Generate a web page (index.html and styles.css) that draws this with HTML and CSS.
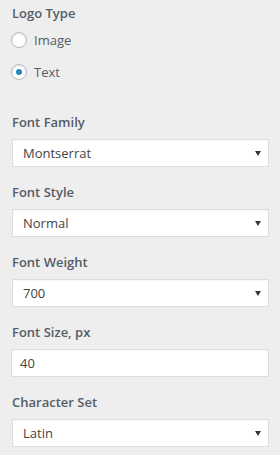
FILE: index.html
```html
<!DOCTYPE html>
<html>
<head>
<title>Logo Settings</title>
<link rel="stylesheet" href="styles.css">
</head>
<body>
	<div class="panel">
		<div class="group">
			<div class="group-title">Logo Type</div>
			<label class="radio-row"><span class="radio"></span>Image</label>
			<label class="radio-row"><span class="radio checked"></span>Text</label>
		</div>

		<div class="field first">
			<div class="field-label">Font Family</div>
			<div class="select">
				<span class="select-value">Montserrat</span>
				<svg class="caret" width="6" height="5" viewBox="0 0 6 5"><path d="M0 0H6L3 5Z" fill="#32373c"/></svg>
			</div>
		</div>

		<div class="field">
			<div class="field-label">Font Style</div>
			<div class="select">
				<span class="select-value">Normal</span>
				<svg class="caret" width="6" height="5" viewBox="0 0 6 5"><path d="M0 0H6L3 5Z" fill="#32373c"/></svg>
			</div>
		</div>

		<div class="field">
			<div class="field-label">Font Weight</div>
			<div class="select">
				<span class="select-value">700</span>
				<svg class="caret" width="6" height="5" viewBox="0 0 6 5"><path d="M0 0H6L3 5Z" fill="#32373c"/></svg>
			</div>
		</div>

		<div class="field">
			<div class="field-label">Font Size, px</div>
			<div class="input">40</div>
		</div>

		<div class="field">
			<div class="field-label">Character Set</div>
			<div class="select">
				<span class="select-value">Latin</span>
				<svg class="caret" width="6" height="5" viewBox="0 0 6 5"><path d="M0 0H6L3 5Z" fill="#32373c"/></svg>
			</div>
		</div>
	</div>
</body>
</html>
```

FILE: styles.css
```css
* {
	box-sizing: border-box;
}
body {
	margin: 0;
	background-color: #eeeeee;
	font-family: "Open Sans", "Noto Sans", sans-serif;
	color: #555d66;
}
.panel {
	padding: 3px 11px 0 12px;
	display: flex;
	flex-direction: column;
}
.group-title, .field-label {
	font-size: 13px;
	font-weight: 600;
	line-height: 20px;
	color: #555d66;
}
.group-title {
	margin-bottom: 1px;
}
.radio-row {
	display: flex;
	align-items: center;
	gap: 7px;
	height: 32px;
	font-size: 13px;
	color: #555d66;
}
.radio {
	width: 16px;
	height: 16px;
	border-radius: 50%;
	border: 1px solid #b4b9be;
	background-color: #fff;
	box-shadow: inset 0 1px 2px rgba(0,0,0,.1);
	display: flex;
	align-items: center;
	justify-content: center;
	margin-left: -1px;
}
.radio.checked::after {
	content: "";
	width: 6px;
	height: 6px;
	border-radius: 50%;
	background-color: #1e8cbe;
}
.field {
	margin-top: 15px;
}
.field.first {
	margin-top: 24px;
}
.field-label {
	margin-bottom: 7px;
}
.select, .input {
	height: 28px;
	background-color: #fff;
	border: 1px solid #dddddd;
	box-shadow: inset 0 1px 2px rgba(0,0,0,.04);
	display: flex;
	align-items: center;
	font-size: 13px;
	color: #444444;
}
.select {
	padding: 0 7px 0 10px;
	justify-content: space-between;
}
.input {
	margin-left: -1px;
	padding-left: 8px;
}
.caret {
	display: block;
}
```
